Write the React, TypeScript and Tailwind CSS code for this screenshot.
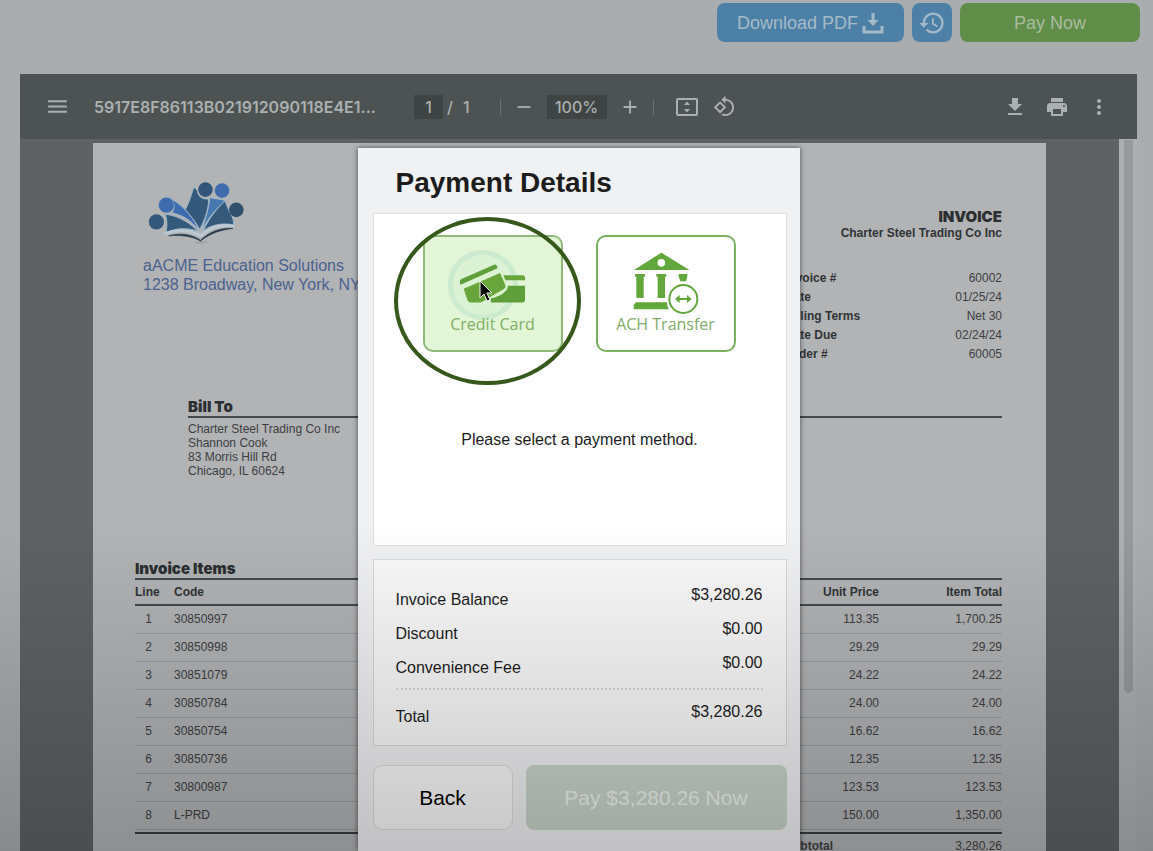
import React from "react";
import {
  MdAdd,
  MdFileDownload,
  MdHistory,
  MdMenu,
  MdMoreVert,
  MdPrint,
  MdRemove,
  MdRotate90DegreesCcw,
} from "react-icons/md";

const details = [
  ["Invoice #", "60002"],
  ["Date", "01/25/24"],
  ["Billing Terms", "Net 30"],
  ["Date Due", "02/24/24"],
  ["Order #", "60005"],
];

const items = [
  ["30850997", "113.35", "1,700.25"],
  ["30850998", "29.29", "29.29"],
  ["30851079", "24.22", "24.22"],
  ["30850784", "24.00", "24.00"],
  ["30850754", "16.62", "16.62"],
  ["30850736", "12.35", "12.35"],
  ["30800987", "123.53", "123.53"],
  ["L-PRD", "150.00", "1,350.00"],
];

const charges = [
  ["Invoice Balance", "$3,280.26"],
  ["Discount", "$0.00"],
  ["Convenience Fee", "$0.00"],
];

function TrayDownloadIcon() {
  return (
    <svg viewBox="0 0 22 22" className="h-[22px] w-[22px]" fill="none" aria-hidden="true">
      <path d="M2 14v6h18v-6" stroke="currentColor" strokeWidth="3" />
      <path d="M9.500 1h3v7h4L11 14 5.500 8h4z" fill="currentColor" />
    </svg>
  );
}

function FitPageIcon() {
  return (
    <svg viewBox="0 0 24 20" className="h-5 w-6" fill="none" aria-hidden="true">
      <rect x="2" y="2" width="20" height="16" rx="1" stroke="currentColor" strokeWidth="2" />
      <path d="M12 4.500l3 3.500H9zM12 15.500l3-3.500H9z" fill="currentColor" />
    </svg>
  );
}

function SchoolLogo() {
  return (
    <svg viewBox="84 64 292 190" className="h-[63px] w-[97px]" role="img" aria-label="aACME logo">
      <ellipse cx="245" cy="249" rx="20" ry="4" fill="#a0a1a2" />
      <g stroke="#a0b6c8" strokeWidth="3">
        <path d="M136 165c24 0 66 16 98 50-38-12-66-8-96 4 4-20 4-36-2-54z" fill="#345a7b" />
        <path d="M140 106l18 14c38 24 64 56 80 94-26-34-50-46-82-54 8-12 8-26 2-36z" fill="#3f6cae" />
        <path d="M222 82l10 10c2 16 12 28 34 26 2 28-10 60-26 92-14-24-28-42-44-60 12-20 18-44 26-68z" fill="#34597a" />
        <path d="M270 114c16 4 34 4 50 10-32 22-54 52-74 88 10-32 22-66 24-98z" fill="#4679ad" />
        <path d="M316 124l12 30c4 10 14 18 14 42-38-6-66 0-92 18 18-38 40-66 66-90z" fill="#34597a" />
      </g>
      <path d="M134 223c38-14 78-10 108 6 26-22 62-38 102-28" fill="none" stroke="#bac9d3" strokeWidth="8" />
      <path d="M146 229c36-8 68-6 96 14 28-26 58-38 98-36-36 4-68 14-98 38-28-16-56-18-96-16z" fill="#26384a" stroke="#26384a" strokeWidth="2" />
      <circle cx="109" cy="187" r="23" fill="#34587a" />
      <circle cx="139" cy="137" r="23" fill="#3f6caf" />
      <circle cx="257" cy="90" r="22" fill="#31557a" />
      <circle cx="307" cy="93" r="22" fill="#3e6bae" />
      <circle cx="350" cy="151" r="22" fill="#30516d" />
    </svg>
  );
}

function CardsIcon() {
  return (
    <svg viewBox="238 170 202 122" className="h-[41px] w-[67px]" aria-hidden="true">
      <path d="M370 206h60q7 0 7 7v8h-62z" fill="#68a63c" />
      <path d="M334 276q48-10 50-38h53v42q0 8-8 8H334z" fill="#5f9f3a" />
      <path d="M244 218l98-43q8-4 11 5l1 5-111 50q-6-12 1-17z" fill="#5f9f3a" />
      <path d="M252 247l110-48 15 35q4 9-5 14l-68 40h-32q-6 0-9-8z" fill="#68a63c" />
      <path d="M364 194l18 42q3 10-7 16l-32 17" fill="none" stroke="#d9f2c8" strokeWidth="5" />
    </svg>
  );
}

function BankIcon() {
  return (
    <svg viewBox="760 140 198 186" className="h-[62px] w-[66px]" fill="#62a73b" aria-hidden="true">
      <path fillRule="evenodd" d="M845 142l84 52H763zM845 161a11 11 0 1 0 0 23 11 11 0 0 0 0-23z" />
      <path d="M766 206h30v8h-4v64h-22v-64h-4zM830 206h30v8h-4v64h-22v-64h-4zM897 206h26v8l-4 14h-17l-5-14z" />
      <path d="M768 291h94q-1 10 6 21H762v-12z" />
      <circle cx="911" cy="281" r="42" fill="#fff" stroke="#62a73b" strokeWidth="6" />
      <path d="M886 281l14-12v9h22v-9l14 12-14 12v-9h-22v9z" />
    </svg>
  );
}

function Cursor() {
  return (
    <svg viewBox="0 0 14 22" className="h-[22px] w-[14px]" aria-hidden="true">
      <path d="M1 1v17l4-4 3 7 3-1-3-7h5z" fill="#050805" stroke="#eef6ea" strokeWidth="1" />
    </svg>
  );
}

function TopActions() {
  return (
    <div className="flex h-[74px] shrink-0 items-start justify-end gap-2 pt-[3px] pr-[13px] text-lg text-[#a5bac8]">
      <button className="flex h-[39px] w-[187px] items-center justify-center gap-1 rounded-lg bg-[#4c80a6]">
        Download PDF <TrayDownloadIcon />
      </button>
      <button aria-label="History" className="flex h-[39px] w-10 items-center justify-center rounded-lg bg-[#4c80a6]">
        <MdHistory size={28} />
      </button>
      <button className="h-[39px] w-[180px] rounded-lg bg-[#608d48] text-[#a9bd9f]">Pay Now</button>
    </div>
  );
}

function ViewerToolbar() {
  return (
    <div className="flex h-[65px] shrink-0 items-center bg-[#4d5252] pr-[26px] pl-[25px] font-['Inter',sans-serif] text-base font-medium text-[#abb0b0]">
      <button aria-label="Menu">
        <MdMenu size={25} />
      </button>
      <span className="ml-6 w-80 font-semibold">5917E8F86113B021912090118E4E1...</span>
      <input
        aria-label="Page number"
        defaultValue="1"
        className="h-6 w-[29px] bg-[#3f4444] text-center"
      />
      <span className="ml-1">/</span>
      <span className="ml-[10px]">1</span>
      <span className="ml-[30px] h-4 w-px bg-[#6a6f6f]" />
      <button aria-label="Zoom out" className="ml-3">
        <MdRemove size={22} />
      </button>
      <input
        aria-label="Zoom level"
        defaultValue="100%"
        className="ml-3 h-6 w-[60px] bg-[#3f4444] text-center"
      />
      <button aria-label="Zoom in" className="ml-3">
        <MdAdd size={22} />
      </button>
      <span className="ml-3 h-4 w-px bg-[#6a6f6f]" />
      <button aria-label="Fit to page" className="ml-[21px]">
        <FitPageIcon />
      </button>
      <button aria-label="Rotate" className="ml-[14px]">
        <MdRotate90DegreesCcw size={23} />
      </button>
      <div className="ml-auto flex items-center gap-[18px]">
        <button aria-label="Download">
          <MdFileDownload size={24} />
        </button>
        <button aria-label="Print">
          <MdPrint size={24} />
        </button>
        <button aria-label="More">
          <MdMoreVert size={24} />
        </button>
      </div>
    </div>
  );
}

const heading = "font-['Inter',sans-serif] text-[15px] font-black text-[#2b2e30]";

function InvoicePage() {
  return (
    <div className="mt-1 flex-1 bg-[#b1b3b5] pr-[44px] pl-[42px] text-xs text-[#3d4043]">
      <div className="flex h-[255px] justify-between pt-[38px]">
        <div className="pl-2 text-base leading-[19px] text-[#4c6290]">
          <div className="pl-[5px]">
            <SchoolLogo />
          </div>
          <p className="pt-3">aACME Education Solutions</p>
          <p>1238 Broadway, New York, NY</p>
        </div>
        <div className="w-[217px] pt-7">
          <h2 className={`${heading} text-right leading-4`}>INVOICE</h2>
          <p className="text-right font-bold leading-4 text-[#303336]">
            <span className="-ml-4 whitespace-nowrap">Charter Steel Trading Co Inc</span>
          </p>
          <dl className="pt-7">
            {details.map(([label, value]) => (
              <div key={label} className="flex justify-between leading-[19px]">
                <dt className="font-bold text-[#303336]">{label}</dt>
                <dd>{value}</dd>
              </div>
            ))}
          </dl>
        </div>
      </div>
      <div className="h-[161px] pl-[53px]">
        <h3 className={`${heading} border-b-2 border-[#45484b] leading-[18px]`}>Bill To</h3>
        <address className="pt-1 leading-[14px] not-italic">
          Charter Steel Trading Co Inc
          <br />
          Shannon Cook
          <br />
          83 Morris Hill Rd
          <br />
          Chicago, IL 60624
        </address>
      </div>
      <h3 className={`${heading} leading-[19px]`}>Invoice Items</h3>
      <table className="w-full table-fixed">
        <thead>
          <tr className="h-[26px] border-y-2 border-[#45484b] text-[#303336]">
            <th className="w-[39px] text-left">Line</th>
            <th className="text-left">Code</th>
            <th className="w-[90px] text-right">Unit Price</th>
            <th className="w-[123px] text-right">Item Total</th>
          </tr>
        </thead>
        <tbody>
          {items.map(([code, price, total], i) => (
            <tr key={code} className="h-7 border-b border-[#999c9e]">
              <td className="pr-3 text-center">{i + 1}</td>
              <td>{code}</td>
              <td className="text-right">{price}</td>
              <td className="text-right">{total}</td>
            </tr>
          ))}
        </tbody>
      </table>
      <div className="mt-[2px] border-t-2 border-[#3a3d40] pt-1">
        <div className="ml-auto flex w-[217px] justify-between">
          <b>Subtotal</b>
          <span>3,280.26</span>
        </div>
      </div>
    </div>
  );
}

const option =
  "relative flex h-[117px] w-[140px] flex-col items-center rounded-[10px] border-2 pt-[15px] font-['Open_Sans',sans-serif] text-base leading-5";

function PaymentDialog() {
  return (
    <section
      role="dialog"
      aria-labelledby="payment-title"
      className="flex w-[442px] flex-col bg-[#f0f1f3] pr-[13px] pl-[15px] text-[#1c1c1c] shadow-[0_0_5px_rgba(0,0,0,0.6)]"
    >
      <h1 id="payment-title" className="h-[65px] pt-[2px] pl-[23px] text-[28px] leading-[65px] font-bold">
        Payment Details
      </h1>
      <div className="h-[333px] border border-[#dedfe1] bg-white">
        <div className="flex gap-[33px] pt-[21px] pl-[49px]">
          <button className={`${option} border-[#8fb97a] bg-[#e2f5d6] text-[#7fae66]`}>
            <span className="absolute top-[13px] left-[23px] h-[70px] w-[70px] rounded-full border-[5px] border-[#cbead0] bg-[#dcf2d4]" />
            <span className="relative flex h-[62px] items-center">
              <CardsIcon />
            </span>
            <span className="relative">Credit Card</span>
            <span className="absolute top-[43px] left-[54px]">
              <Cursor />
            </span>
            <span className="pointer-events-none absolute -top-5 -left-[31px] h-[168px] w-[187px] rounded-[50%] border-4 border-[#36591b]" />
          </button>
          <button className={`${option} border-[#7bb060] bg-white text-[#80ac68]`}>
            <BankIcon />
            <span>ACH Transfer</span>
          </button>
        </div>
        <p className="pt-[76px] text-center text-base leading-6">
          Please select a payment method.
        </p>
      </div>
      <div className="mt-[13px] h-[187px] border border-[#d8d9da] bg-[#fafafa] pt-[18px] pr-[23px] pl-[22px] text-base">
        {charges.map(([label, value]) => (
          <div key={label} className="flex h-[34px] items-start justify-between leading-[34px]">
            <span className="pt-[5px]">{label}</span>
            <span>{value}</span>
          </div>
        ))}
        <div className="mt-2 flex items-start justify-between border-t-2 border-dotted border-[#dadada] pt-1 leading-[36px]">
          <span className="pt-[5px]">Total</span>
          <span>{"$3,280.26"}</span>
        </div>
      </div>
      <div className="mt-[19px] flex gap-[13px] text-[21px]">
        <button className="h-[65px] w-[140px] rounded-[10px] border border-[#dcdcdc] bg-[#f9f9f9] text-black">
          Back
        </button>
        <button disabled className="h-[65px] flex-1 rounded-lg bg-[#c9d4ca] text-[#eef3ee]">
          {"Pay $3,280.26 Now"}
        </button>
      </div>
    </section>
  );
}

export default function App() {
  return (
    <div className="relative flex h-screen flex-col overflow-hidden bg-[#aaadb0] font-['Liberation_Sans',Arial,sans-serif]">
      <TopActions />
      <main className="mr-4 ml-5 flex min-h-0 flex-1 flex-col">
        <ViewerToolbar />
        <div className="flex min-h-0 flex-1">
          <div className="flex min-h-0 flex-1 bg-[#5e6265] pr-[73px] pl-[73px]">
            <InvoicePage />
          </div>
          <div className="flex w-[18px] justify-center bg-[#adb0b2] pt-px">
            <div className="h-[553px] w-[9px] rounded-b-full bg-[#979a9c]" />
          </div>
        </div>
      </main>
      <div className="absolute inset-0 flex justify-center pt-[148px] pr-4 pl-5">
        <PaymentDialog />
      </div>
      <div className="pointer-events-none absolute inset-x-0 bottom-0 h-[330px] bg-linear-to-b from-transparent to-black/20" />
    </div>
  );
}
